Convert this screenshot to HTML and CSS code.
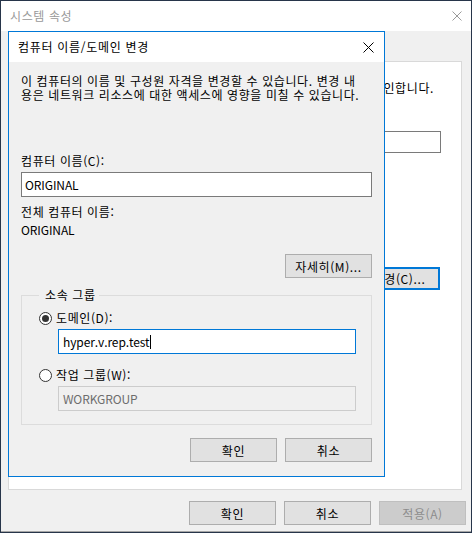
FILE: index.html
```html
<!DOCTYPE html>
<html lang="ko">
<head>
  <meta charset="UTF-8">
  <title>시스템 속성</title>
  <link rel="stylesheet" href="styles.css">
</head>
<body>

<div class="desktop">
  <!-- 뒤쪽 창: 시스템 속성 -->
  <div class="window">
    <div class="titlebar">
      <span class="title inactive">시스템 속성</span>
      <svg class="close" width="10" height="10" viewBox="0 0 10 10">
        <path d="M0.5 0.5 L9.5 9.5 M9.5 0.5 L0.5 9.5" stroke="#9a9a9a" stroke-width="1"/>
      </svg>
    </div>
    <div class="window-body">
      <div class="tabpage">
        <div class="page-text">확인합니다.</div>
        <div class="page-input"></div>
        <div class="page-button"><span>변경(C)...</span></div>
      </div>
      <div class="buttons">
        <button class="btn">확인</button>
        <button class="btn">취소</button>
        <button class="btn" disabled>적용(A)</button>
      </div>
    </div>
  </div>

  <!-- 앞쪽 대화 상자 -->
  <div class="dialog">
    <div class="titlebar dlg-title">
      <span class="title">컴퓨터 이름/도메인 변경</span>
      <svg class="close" width="11" height="11" viewBox="0 0 11 11">
        <path d="M0.5 0.5 L10.5 10.5 M10.5 0.5 L0.5 10.5" stroke="#000" stroke-width="1"/>
      </svg>
    </div>
    <div class="dialog-body">
      <p class="desc">이 컴퓨터의 이름 및 구성원 자격을 변경할 수 있습니다. 변경 내<br>용은 네트워크 리소스에 대한 액세스에 영향을 미칠 수 있습니다.</p>

      <label class="label">컴퓨터 이름(C):</label>
      <div class="textbox wide">ORIGINAL</div>

      <div class="label full-label">전체 컴퓨터 이름:</div>
      <div class="value">ORIGINAL</div>

      <div class="row-right">
        <button class="btn">자세히(M)...</button>
      </div>

      <fieldset class="group">
        <legend>소속 그룹</legend>
        <div class="radio-row">
          <span class="radio checked"></span>
          <span>도메인(D):</span>
        </div>
        <div class="textbox sub focused">hyper.v.rep.test<span class="caret"></span></div>
        <div class="radio-row second">
          <span class="radio"></span>
          <span>작업 그룹(W):</span>
        </div>
        <div class="textbox sub disabled">WORKGROUP</div>
      </fieldset>

      <div class="dlg-buttons">
        <button class="btn">확인</button>
        <button class="btn">취소</button>
      </div>
    </div>
  </div>
</div>

</body>
</html>
```

FILE: styles.css
```css
body {
  margin: 0;
  background-color: #27354a;
  font-family: "Noto Sans CJK KR", sans-serif;
  font-size: 12px;
  letter-spacing: 0.6px;
  color: #000;
}

.desktop {
  position: relative;
  width: 472px;
  height: 533px;
  overflow: hidden;
}

/* 뒤쪽 창 */
.window {
  margin: 1px 0 0 1px;
  width: 470px;
  height: 530px;
  background-color: #f0f0f0;
  border-bottom: 1px solid #a6a6a6;
  display: flex;
  flex-direction: column;
}

.titlebar {
  height: 30px;
  background-color: #fff;
  display: flex;
  align-items: center;
  justify-content: space-between;
  padding: 0 9px 0 9px;
  flex-shrink: 0;
}

.title {
  line-height: 16px;
}

.title.inactive {
  color: #999;
}

.window-body {
  flex: 1;
  display: flex;
  flex-direction: column;
  padding-top: 30px;
}

.tabpage {
  height: 427px;
  margin: 0 9px 0 7px;
  background-color: #fff;
  border: 1px solid #d9d9d9;
  display: flex;
  flex-direction: column;
  align-items: flex-end;
  padding-right: 20px;
  overflow: hidden;
}

.page-text {
  white-space: nowrap;
  margin-top: 18px;
  margin-right: 7px;
  line-height: 16px;
}

.page-input {
  width: 200px;
  height: 20px;
  border: 1px solid #7a7a7a;
  margin-top: 35px;
}

.page-button {
  width: 82px;
  height: 19px;
  border: 2px solid #0078d7;
  background-color: #e1e1e1;
  margin-top: 114px;
  margin-right: 1px;
  display: flex;
  align-items: center;
  justify-content: center;
  box-sizing: content-box;
}

.page-button span {
  white-space: nowrap;
  margin-left: 4px;
}

.buttons {
  display: flex;
  justify-content: flex-end;
  gap: 8px;
  margin-top: 11px;
  padding-right: 5px;
}

.btn {
  width: 87px;
  height: 24px;
  font-family: inherit;
  font-size: 12px;
  letter-spacing: 0.6px;
  color: #000;
  background-color: #e1e1e1;
  border: 1px solid #adadad;
  border-radius: 0;
  padding: 0;
}

.btn:disabled {
  background-color: #cccccc;
  border-color: #bfbfbf;
  color: #8c8c8c;
}

/* 대화 상자 */
.dialog {
  position: absolute;
  left: 8px;
  top: 31px;
  width: 375px;
  height: 444px;
  border: 1px solid #0078d7;
  background-color: #f0f0f0;
  display: flex;
  flex-direction: column;
}

.dlg-title {
  padding: 0 10px 0 9px;
}

.dlg-title .title {
  letter-spacing: 0.7px;
}

.dialog-body {
  padding: 12px 12px 0 12px;
  display: flex;
  flex-direction: column;
}

.desc {
  margin: 0;
  line-height: 14px;
  white-space: nowrap;
}

.label {
  display: block;
  margin-top: 51px;
  line-height: 16px;
}

.textbox {
  height: 23px;
  border: 1px solid #7a7a7a;
  background-color: #fff;
  padding-left: 3px;
  display: flex;
  align-items: center;
  letter-spacing: -0.1px;
}

.wide {
  margin-top: 3px;
}

.full-label {
  margin-top: 7px;
}

.value {
  margin-top: 2px;
  line-height: 16px;
  letter-spacing: -0.1px;
}

.row-right {
  display: flex;
  justify-content: flex-end;
  margin-top: 16px;
}

.group {
  margin: 9px 0 0 0;
  padding: 7px 15px 13px 17px;
  border: 1px solid #dcdcdc;
  min-width: 0;
}

.group legend {
  padding: 0 3px 0 6px;
  margin-left: 0;
  line-height: 16px;
}

.radio-row {
  display: flex;
  align-items: center;
  gap: 4px;
  line-height: 16px;
}

.radio-row.second {
  margin-top: 13px;
}

.radio {
  width: 11px;
  height: 11px;
  border: 1px solid #333;
  border-radius: 50%;
  background-color: #fff;
  position: relative;
}

.radio.checked::after {
  content: "";
  position: absolute;
  left: 2px;
  top: 2px;
  width: 7px;
  height: 7px;
  border-radius: 50%;
  background-color: #333;
}

.sub {
  margin: 3px 0 0 19px;
  padding-left: 4px;
}

.focused {
  border-color: #0078d7;
}

.caret {
  display: inline-block;
  width: 1px;
  height: 14px;
  background-color: #000;
  margin-left: 1px;
}

.disabled {
  background-color: #f0f0f0;
  border-color: #cccccc;
  color: #6d6d6d;
}

.dlg-buttons {
  display: flex;
  justify-content: flex-end;
  gap: 8px;
  margin-top: 13px;
}
```
